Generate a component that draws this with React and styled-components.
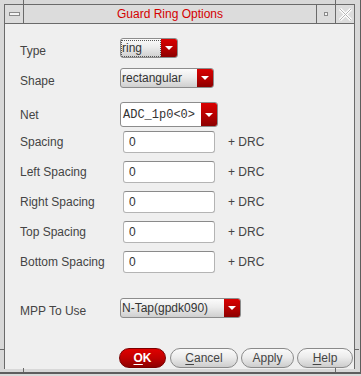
import React from "react";
import styled, { createGlobalStyle, css } from "styled-components";

///style///

const GlobalStyle = createGlobalStyle`
  html, body {
    margin: 0;
    padding: 0;
    background: #dadada;
  }
  * { box-sizing: border-box; }
`;

const Frame = styled.div`
  position: relative;
  width: 361px;
  height: 374px;
  padding: 4px 5px 3px 4px;
  background: #d8d8d8;
  border-right: 1px solid #5e5e5e;
  border-bottom: 2px solid #5e5e5e;
  font-family: "Liberation Sans", Arial, sans-serif;
`;

const Tick = styled.div`
  position: absolute;
  background: #6a6a6a;
  ${p => p.$v ? css`width: 1px; height: 4px;` : css`width: 4px; height: 1px;`}
`;

const Client = styled.div`
  height: 100%;
  display: flex;
  flex-direction: column;
  border: 1px solid #6a6a6a;
  border-bottom: none;
`;

const TitleBar = styled.div`
  height: 19px;
  display: flex;
  background: #dcdcdc;
  border-bottom: 1px solid #6a6a6a;
`;

const FrameButton = styled.div`
  width: 19px;
  display: flex;
  align-items: center;
  justify-content: center;
  ${p => p.$left ? "border-right: 1px solid #6a6a6a;" : "border-left: 1px solid #6a6a6a;"}
`;

const MenuGlyph = styled.div`
  width: 11px;
  height: 4px;
  background: #f4f4f4;
  border: 1px solid #8a8a8a;
`;

const MinGlyph = styled.div`
  width: 4px;
  height: 4px;
  background: #f4f4f4;
  border: 1px solid #8a8a8a;
`;

const Title = styled.div`
  flex: 1;
  text-align: center;
  color: #d40000;
  font-size: 12px;
  line-height: 18px;
`;

const Content = styled.div`
  flex: 1;
  background: #efefef;
  padding: 14px 0 0 15px;
  color: #444444;
  font-size: 12px;
`;

const Row = styled.div`
  display: grid;
  grid-template-columns: 100px auto auto;
  justify-content: start;
  align-items: center;
  height: ${p => p.$h}px;
  margin-top: ${p => p.$mt || 0}px;
`;

const Label = styled.div`
  padding-top: ${p => p.$drop || 0}px;
  white-space: nowrap;
`;

const Combo = styled.div`
  display: flex;
  width: ${p => p.$w}px;
  height: ${p => p.$h || 20}px;
  border: 1px solid #8c8c8c;
  border-radius: 3px;
  overflow: hidden;
  background: ${p => p.$white ? "#ffffff" : "linear-gradient(#fbfbfb, #ececec 45%, #cfcfcf)"};
`;

const ComboText = styled.div`
  flex: 1;
  display: flex;
  align-items: center;
  padding-left: ${p => p.$mono ? 2 : 1}px;
  font-family: ${p => p.$mono ? `"Liberation Mono", "DejaVu Sans Mono", monospace` : "inherit"};
  font-size: 12px;
  color: #333333;
  white-space: nowrap;
  overflow: hidden;
`;

const Focus = styled.span`
  display: flex;
  align-items: center;
  height: 15px;
  width: 38px;
  outline: 1px dotted #555;
`;

const Arrow = styled.div`
  width: 16px;
  display: flex;
  align-items: center;
  justify-content: center;
  background: linear-gradient(#d80000, #b80000 50%, #8c0000);
  &::after {
    content: "";
    border-left: 4px solid transparent;
    border-right: 4px solid transparent;
    border-top: 4px solid #ffffff;
  }
`;

const Input = styled.div`
  margin-left: 3px;
  width: 92px;
  height: 22px;
  background: #ffffff;
  border: 1px solid #b4b4b4;
  border-top-color: #8a8a8a;
  border-radius: 3px;
  padding-left: 5px;
  display: flex;
  align-items: center;
  font-size: 12px;
  color: #333333;
`;

const Drc = styled.div`
  margin-left: 13px;
`;

const ButtonRow = styled.div`
  display: flex;
  justify-content: flex-end;
  gap: 3px;
  margin-top: 30px;
  padding-right: 1px;
`;

const Button = styled.div`
  width: ${p => p.$w}px;
  height: 20px;
  border-radius: 10px;
  border: 1px solid #8a8a8a;
  display: flex;
  align-items: center;
  justify-content: center;
  font-size: 12px;
  color: #444;
  background: linear-gradient(#fafafa, #ececec 45%, #cdcdcd);
  ${p => p.$primary && css`
    margin-right: 1px;
    color: #ffffff;
    font-weight: bold;
    border-color: #7a0000;
    background: linear-gradient(#e00000, #c00000 50%, #8e0000);
  `}
  u { text-decoration-thickness: 1px; text-underline-offset: 2px; }
`;

//style end//

const spacings = ["Spacing", "Left Spacing", "Right Spacing", "Top Spacing", "Bottom Spacing"];

export default function App() {
  return (
    <>
      <GlobalStyle />
      <Frame>
        <Tick $v style={{ left: 23, top: 0 }} />
        <Tick $v style={{ left: 335, top: 0 }} />
        <Tick style={{ left: 0, top: 349 }} />
        <Tick style={{ left: 355, top: 349 }} />
        <Tick $v style={{ left: 23, top: 368 }} />
        <Tick $v style={{ left: 335, top: 368 }} />
        <Client>
          <TitleBar>
            <FrameButton $left><MenuGlyph /></FrameButton>
            <Title>Guard Ring Options</Title>
            <FrameButton><MinGlyph /></FrameButton>
            <FrameButton>
              <svg width="15" height="15" viewBox="0 0 15 15">
                <path d="M2 2 L13 13 M13 2 L2 13" stroke="#ffffff" strokeWidth="3" />
                <path d="M2 2 L13 13 M13 2 L2 13" stroke="#b4b4b4" strokeWidth="1" />
              </svg>
            </FrameButton>
          </TitleBar>
          <Content>
            <Row $h={20}>
              <Label $drop={5}>Type</Label>
              <Combo $w={58}>
                <ComboText><Focus>ring</Focus></ComboText>
                <Arrow />
              </Combo>
            </Row>
            <Row $h={20} $mt={10}>
              <Label $drop={5}>Shape</Label>
              <Combo $w={94}>
                <ComboText>rectangular</ComboText>
                <Arrow />
              </Combo>
            </Row>
            <Row $h={25} $mt={14}>
              <Label>Net</Label>
              <Combo $w={98} $h={25} $white>
                <ComboText $mono>ADC_1p0&lt;0&gt;</ComboText>
                <Arrow />
              </Combo>
            </Row>
            {spacings.map(name => (
              <Row key={name} $h={30}>
                <Label>{name}</Label>
                <Input>0</Input>
                <Drc>+ DRC</Drc>
              </Row>
            ))}
            <Row $h={20} $mt={21}>
              <Label $drop={6}>MPP To Use</Label>
              <Combo $w={121}>
                <ComboText>N-Tap(gpdk090)</ComboText>
                <Arrow />
              </Combo>
            </Row>
            <ButtonRow>
              <Button $w={47} $primary><span><u>O</u>K</span></Button>
              <Button $w={68}><span><u>C</u>ancel</span></Button>
              <Button $w={53}>Apply</Button>
              <Button $w={56}><span><u>H</u>elp</span></Button>
            </ButtonRow>
          </Content>
        </Client>
      </Frame>
    </>
  );
}
